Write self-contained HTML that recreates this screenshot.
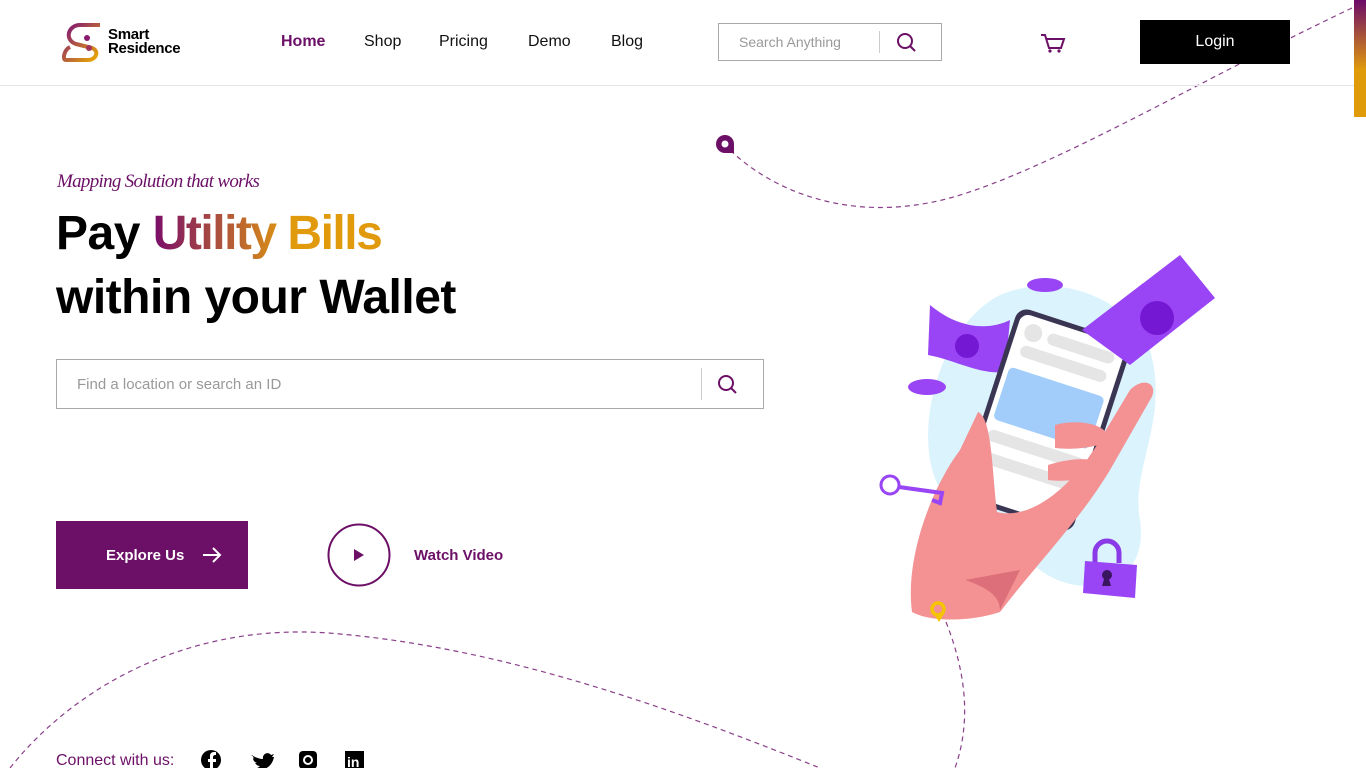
<!DOCTYPE html>
<html><head><meta charset="utf-8"><style>
*{margin:0;padding:0;box-sizing:border-box}
body{width:1366px;height:768px;overflow:hidden;background:#fff;font-family:"Liberation Sans",sans-serif;position:relative;color:#000}
.abs{position:absolute}
.nav a{position:absolute;top:33px;font-size:16px;color:#111;text-decoration:none}
</style></head><body>
<svg class="abs" style="left:0;top:0" width="1366" height="768">
<path d="M1352 8 C1200 80 1050 170 950 198 C850 225 770 190 728 148" fill="none" stroke="#8a3f8a" stroke-width="1.2" stroke-dasharray="5 4"/>
<path d="M10 768 C80 680 200 620 340 634 C520 650 700 720 820 768" fill="none" stroke="#8a3f8a" stroke-width="1.2" stroke-dasharray="5 4"/>
<path d="M946 622 C965 670 972 720 955 768" fill="none" stroke="#8a3f8a" stroke-width="1.2" stroke-dasharray="5 4"/>
<path d="M725 135 a9 9 0 0 1 9 9 v9 h-9 a9 9 0 0 1 0 -18z" fill="#6c0f66"/><circle cx="725" cy="144" r="3.5" fill="#fff"/>
<defs><linearGradient id="g" x1="0" y1="0" x2="0" y2="1"><stop offset="0" stop-color="#6c0a6a"/><stop offset="0.6" stop-color="#e09b0b"/></linearGradient>
<linearGradient id="lg" x1="0" y1="0" x2="1" y2="1"><stop offset="0" stop-color="#7b0f7a"/><stop offset="1" stop-color="#f0b000"/></linearGradient></defs>
<rect x="1354" y="0" width="12" height="117" fill="url(#g)"/>
<line x1="0" y1="85.5" x2="1354" y2="85.5" stroke="#e5e5e5"/>
<path d="M100 25 H80 C68 25 64 40 76 44 L92 48 C100 51 96 60 88 60 H66 C62 60 64 50 70 47" fill="none" stroke="url(#lg)" stroke-width="4" stroke-linejoin="round"/>
<circle cx="87" cy="38" r="3" fill="#8b1a6e"/><circle cx="89" cy="48" r="3" fill="#a3345a"/>
<path d="M1000 295 C1060 270 1130 300 1150 350 C1170 420 1130 470 1140 520 C1150 590 1080 600 1040 570 C1000 540 940 520 930 460 C920 400 950 320 1000 295Z" fill="#daf3fd"/>
<path d="M930 305 C960 330 990 330 1010 320 L1005 372 C980 375 955 360 928 355Z" fill="#9945f5"/>
<circle cx="967" cy="346" r="12" fill="#7418d4"/>
<ellipse cx="1045" cy="285" rx="18" ry="7" fill="#9945f5"/><ellipse cx="927" cy="387" rx="19" ry="8" fill="#9945f5"/>
<g transform="rotate(18 1045 420)"><rect x="985" y="320" width="120" height="200" rx="12" fill="#3a3553"/><rect x="990" y="325" width="110" height="190" rx="9" fill="#fff"/>
<rect x="995" y="380" width="100" height="55" rx="5" fill="#a2cdfb"/><circle cx="1007" cy="341" r="9" fill="#e5e5e5"/><rect x="1022" y="335" width="70" height="12" rx="6" fill="#e5e5e5"/><rect x="1000" y="355" width="90" height="12" rx="6" fill="#e5e5e5"/><rect x="995" y="445" width="100" height="12" rx="6" fill="#e5e5e5"/><rect x="995" y="468" width="100" height="12" rx="6" fill="#e5e5e5"/></g>
<path d="M1082 330 L1180 255 L1215 298 L1130 365Z" fill="#9945f5"/><circle cx="1157" cy="318" r="17" fill="#7418d4"/>
<path d="M912 612 C905 560 930 490 960 450 L978 412 C992 418 992 470 997 512 C1030 520 1070 490 1100 440 L1130 390 C1145 375 1160 385 1150 400 L1110 470 C1080 520 1040 560 1000 612 C970 622 930 622 912 612Z" fill="#f39193"/>
<path d="M1055 425 C1080 418 1110 425 1108 440 C1100 448 1070 450 1055 448Z M1048 465 C1080 455 1105 458 1102 472 C1090 480 1060 482 1048 480Z" fill="#f39193"/>
<path d="M965 580 C990 588 1000 598 1000 610 L1020 570Z" fill="#dc6f79"/>
<circle cx="890" cy="485" r="9" fill="none" stroke="#9945f5" stroke-width="3"/><path d="M899 487 L942 493 L940 503 L932 500" fill="none" stroke="#9945f5" stroke-width="4"/>
<path d="M1095 563 v-10 a12 12 0 0 1 24 0 v10" fill="none" stroke="#8a3ae6" stroke-width="5"/><path d="M1085 561 L1137 565 L1135 598 L1083 593Z" fill="#9945f5"/><circle cx="1107" cy="575" r="5" fill="#3a1560"/><path d="M1105 576 l-3 10 h9 l-3 -10z" fill="#3a1560"/>
<circle cx="938" cy="609" r="6" fill="none" stroke="#f5c400" stroke-width="3.5"/><path d="M934 614 L939 622 L944 614Z" fill="#f5c400"/>
<circle cx="905" cy="41" r="7" fill="none" stroke="#6c0f66" stroke-width="2"/><line x1="910" y1="46" x2="915" y2="51" stroke="#6c0f66" stroke-width="2"/>
<line x1="879.5" y1="31" x2="879.5" y2="53" stroke="#ccc"/>
<path d="M1041 35 h4 l4 13 h12 l3 -9 h-17" fill="none" stroke="#6c0f66" stroke-width="2"/><circle cx="1050" cy="51" r="1.6" fill="#6c0f66"/><circle cx="1059" cy="51" r="1.6" fill="#6c0f66"/>
<circle cx="726" cy="383" r="7" fill="none" stroke="#6c0f66" stroke-width="2"/><line x1="731" y1="388" x2="736" y2="393" stroke="#6c0f66" stroke-width="2"/>
<line x1="701.5" y1="368" x2="701.5" y2="400" stroke="#ccc"/>
<circle cx="211" cy="760" r="10" fill="#000"/><path d="M213 770 v-8 h3 v-3 h-3 v-2 c0-1 1-2 2-2 h1 v-3 h-2 c-3 0-4 2-4 4 v3 h-2 v3 h2 v8z" fill="#fff"/>
<path d="M251 755 c4 2 8 4 12 4 c-1-5 5-8 8-4 l3-1 -2 3 2 0 c-2 10 -10 15 -22 12 c4 0 6-1 8-3 c-3 0-4-2-5-3 h2 c-3-1-4-3-4-5 l2 1 c-2-1-3-4-2-4z" fill="#000"/>
<rect x="299" y="751" width="18" height="18" rx="4" fill="#000"/><circle cx="308" cy="760" r="4" fill="none" stroke="#fff" stroke-width="2"/>
<rect x="345" y="751" width="19" height="19" fill="#000"/><text x="347" y="767" font-family="Liberation Sans" font-weight="bold" font-size="14" fill="#fff">in</text>
<circle cx="359" cy="555" r="30.5" fill="none" stroke="#6c0f66" stroke-width="2"/><path d="M354 549 L364 555 L354 561Z" fill="#6c0f66"/>
<rect x="56" y="521" width="192" height="68" fill="#6c0f66"/>
<path d="M203 555 h17 M213 548 l7 7 -7 7" fill="none" stroke="#fff" stroke-width="2"/>
</svg>
<div class="abs" style="left:108px;top:28px;font-size:15px;font-weight:bold;line-height:14px;letter-spacing:-.3px">Smart<br>Residence</div>
<div class="nav"><a style="left:281px;color:#6c0f66;font-weight:bold">Home</a><a style="left:364px">Shop</a><a style="left:439px">Pricing</a><a style="left:528px">Demo</a><a style="left:611px">Blog</a></div>
<div class="abs" style="left:718px;top:23px;width:224px;height:38px;border:1px solid #aaa"></div>
<div class="abs" style="left:739px;top:34px;font-size:14px;color:#999">Search Anything</div>
<div class="abs" style="left:1140px;top:20px;width:150px;height:44px;background:#000;color:#fff;font-size:16px;text-align:center;line-height:44px">Login</div>
<div class="abs" style="left:57px;top:171px;font-size:19px;font-style:italic;color:#6c0f66;font-family:'Liberation Serif',serif;letter-spacing:-.7px">Mapping Solution that works</div>
<div class="abs" style="left:56px;top:202px;font-size:48px;font-weight:bold;line-height:64px;letter-spacing:-.5px">Pay <span style="letter-spacing:-1.5px;background:linear-gradient(90deg,#7a0c6a,#e29a0d 60%);-webkit-background-clip:text;color:transparent">Utility Bills</span><br>within your Wallet</div>
<div class="abs" style="left:56px;top:359px;width:708px;height:50px;border:1px solid #aaa"></div>
<div class="abs" style="left:77px;top:376px;font-size:15px;color:#999">Find a location or search an ID</div>
<div class="abs" style="left:106px;top:547px;color:#fff;font-weight:bold;font-size:15px">Explore Us</div>
<div class="abs" style="left:414px;top:547px;color:#6c0f66;font-weight:bold;font-size:15px">Watch Video</div>
<div class="abs" style="left:56px;top:752px;color:#6c0f66;font-size:16px">Connect with us:</div>
</body></html>
